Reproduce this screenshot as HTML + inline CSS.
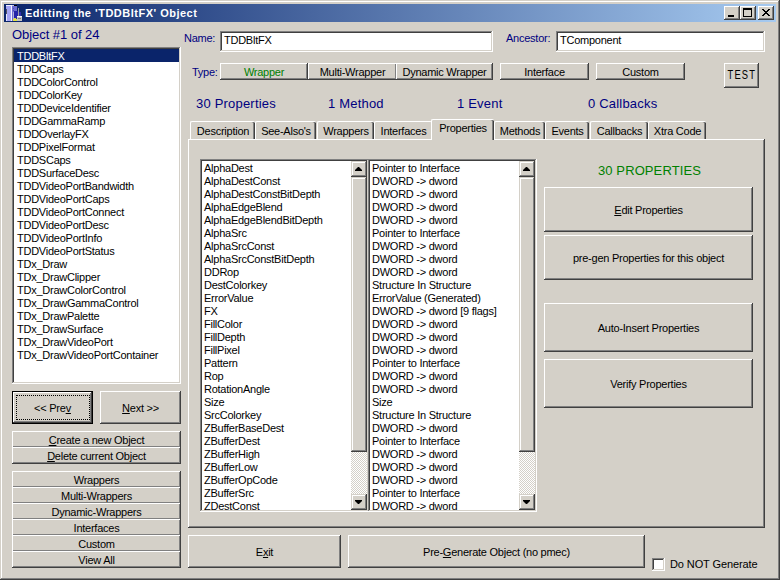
<!DOCTYPE html>
<html><head><meta charset="utf-8">
<style>
*{margin:0;padding:0;box-sizing:border-box}
html,body{width:780px;height:580px;overflow:hidden;background:#d4d0c8}
body{position:relative;font-family:"Liberation Sans",sans-serif;font-size:11px;color:#000;letter-spacing:-0.25px}
.a{position:absolute}
.win{left:0;top:0;width:780px;height:580px;background:#d4d0c8;
 box-shadow:inset -1px -1px #404040,inset 1px 1px #d4d0c8,inset -2px -2px #808080,inset 2px 2px #fff}
.title{left:4px;top:4px;width:772px;height:18px;background:linear-gradient(to right,#0a246a,#a6caf0)}
.ttext{left:25px;top:7px;color:#fff;font-weight:bold;font-size:11px;letter-spacing:0.5px;white-space:nowrap}
.raised{background:#d4d0c8;box-shadow:inset -1px -1px #404040,inset 1px 1px #fff,inset -2px -2px #808080,inset 2px 2px #d4d0c8}
.sunken{background:#fff;box-shadow:inset -1px -1px #fff,inset 1px 1px #808080,inset -2px -2px #d4d0c8,inset 2px 2px #404040}
.btn{display:flex;align-items:center;justify-content:center;white-space:nowrap;font-size:11px}
.lbl{white-space:nowrap;color:#000080}
.big{font-size:13px;letter-spacing:0.2px}
.list{overflow:hidden}
.list .it{height:13px;line-height:12px;padding-top:1px;padding-left:3px;white-space:nowrap;font-size:11px}
#lp .it,#lt .it{padding-left:2px}
.cb{width:13px;height:13px;background:#fff;box-shadow:inset -1px -1px #fff,inset 1px 1px #808080,inset -2px -2px #d4d0c8,inset 2px 2px #404040}
.tab{height:18px;top:121px;background:#d4d0c8;white-space:nowrap;font-size:11px;text-align:center;line-height:19px;
 border-left:1px solid #fff;border-top:1px solid #fff;border-top-left-radius:2px;border-top-right-radius:2px;
 box-shadow:inset -1px 0 #404040, inset -2px 0 #808080}

.sb{position:absolute;width:16px;background-color:#e8e6e2;background-image:repeating-conic-gradient(#fff 0 25%,#d4d0c8 0 50%);background-size:2px 2px}
.sbb{position:absolute;left:0;width:16px;background:#d4d0c8;box-shadow:inset -1px -1px #404040,inset 1px 1px #d4d0c8,inset -2px -2px #808080,inset 2px 2px #fff}
u{text-decoration:underline}
</style></head><body>
<div class="a win"></div>
<div class="a title"></div>
<svg class="a" style="left:0;top:0" width="24" height="24" viewBox="0 0 24 24" shape-rendering="crispEdges">
 <rect x="6" y="5" width="5" height="16" fill="#a4a4f4"/>
 <rect x="6" y="5" width="6" height="1" fill="#f0f0ff"/>
 <rect x="6" y="9" width="1" height="5" fill="#505060"/><rect x="6" y="14" width="1" height="7" fill="#e8e8ff"/>
 <rect x="11" y="5" width="1" height="16" fill="#f4f4ff"/>
 <rect x="12" y="6" width="5" height="15" fill="#6c6cd0"/>
 <rect x="12" y="5" width="2" height="1" fill="#c0c0f0"/>
 <rect x="14" y="5" width="3" height="1" fill="#000"/>
 <rect x="13" y="8" width="1" height="1" fill="#5050b0"/><rect x="13" y="10" width="1" height="1" fill="#5050b0"/>
 <rect x="14" y="11" width="4" height="8" fill="#2424a8"/>
 <rect x="13" y="12" width="1" height="7" fill="#b0b0d8"/>
 <rect x="18" y="8" width="1" height="9" fill="#9898a8"/>
 <rect x="19" y="12" width="2" height="4" fill="#3030b0"/>
 <rect x="13" y="19" width="4" height="2" fill="#e4e440"/>
 <rect x="14" y="18" width="2" height="1" fill="#d8d850"/>
 <rect x="17" y="16" width="5" height="5" fill="#c4c4c4"/>
 <rect x="17" y="16" width="5" height="1" fill="#f4f4f4"/>
 <rect x="18" y="18" width="3" height="1" fill="#808080"/>
</svg>
<div class="a ttext">Editting the 'TDDBltFX' Object</div>
<!-- caption buttons -->
<div class="a raised" style="left:724px;top:6px;width:16px;height:14px"><div class="a" style="left:4px;top:9px;width:6px;height:2px;background:#000"></div></div>
<div class="a raised" style="left:740px;top:6px;width:16px;height:14px"><div class="a" style="left:3px;top:2px;width:9px;height:9px;border:1px solid #000;border-top-width:2px"></div></div>
<div class="a raised" style="left:758px;top:6px;width:16px;height:14px">
 <svg class="a" style="left:4px;top:3px" width="8" height="7" viewBox="0 0 8 7" shape-rendering="crispEdges"><g fill="#000"><rect x="0" y="0" width="1" height="1"/><rect x="1" y="0" width="1" height="1"/><rect x="6" y="0" width="1" height="1"/><rect x="7" y="0" width="1" height="1"/><rect x="1" y="1" width="1" height="1"/><rect x="2" y="1" width="1" height="1"/><rect x="5" y="1" width="1" height="1"/><rect x="6" y="1" width="1" height="1"/><rect x="2" y="2" width="1" height="1"/><rect x="3" y="2" width="1" height="1"/><rect x="4" y="2" width="1" height="1"/><rect x="5" y="2" width="1" height="1"/><rect x="3" y="3" width="1" height="1"/><rect x="4" y="3" width="1" height="1"/><rect x="2" y="4" width="1" height="1"/><rect x="3" y="4" width="1" height="1"/><rect x="4" y="4" width="1" height="1"/><rect x="5" y="4" width="1" height="1"/><rect x="1" y="5" width="1" height="1"/><rect x="2" y="5" width="1" height="1"/><rect x="5" y="5" width="1" height="1"/><rect x="6" y="5" width="1" height="1"/><rect x="0" y="6" width="1" height="1"/><rect x="1" y="6" width="1" height="1"/><rect x="6" y="6" width="1" height="1"/><rect x="7" y="6" width="1" height="1"/></g></svg>
</div>

<!-- left column -->
<div class="a lbl big" style="left:12px;top:27px;letter-spacing:-0.05px">Object #1 of 24</div>
<div class="a sunken list" style="left:12px;top:47px;width:169px;height:337px;padding:2px">
 <div class="it" style="background:#0a246a;color:#fff">TDDBltFX</div>
 <div class="it">TDDCaps</div>
 <div class="it">TDDColorControl</div>
 <div class="it">TDDColorKey</div>
 <div class="it">TDDDeviceIdentifier</div>
 <div class="it">TDDGammaRamp</div>
 <div class="it">TDDOverlayFX</div>
 <div class="it">TDDPixelFormat</div>
 <div class="it">TDDSCaps</div>
 <div class="it">TDDSurfaceDesc</div>
 <div class="it">TDDVideoPortBandwidth</div>
 <div class="it">TDDVideoPortCaps</div>
 <div class="it">TDDVideoPortConnect</div>
 <div class="it">TDDVideoPortDesc</div>
 <div class="it">TDDVideoPortInfo</div>
 <div class="it">TDDVideoPortStatus</div>
 <div class="it">TDx_Draw</div>
 <div class="it">TDx_DrawClipper</div>
 <div class="it">TDx_DrawColorControl</div>
 <div class="it">TDx_DrawGammaControl</div>
 <div class="it">TDx_DrawPalette</div>
 <div class="it">TDx_DrawSurface</div>
 <div class="it">TDx_DrawVideoPort</div>
 <div class="it">TDx_DrawVideoPortContainer</div>
</div>
<div class="a" style="left:12px;top:391px;width:81px;height:33px;background:#000;padding:1px">
 <div class="raised btn" style="width:79px;height:31px;position:relative">&lt;&lt; Pre<u>v</u>
  <div class="a" style="left:3px;top:3px;width:74px;height:25px;border:1px dotted #000"></div>
 </div>
</div>
<div class="a raised btn" style="left:100px;top:391px;width:81px;height:33px"><u>N</u>ext &gt;&gt;</div>
<div class="a raised btn" style="left:12px;top:431px;width:169px;height:17px"><u>C</u>reate a new Object</div>
<div class="a raised btn" style="left:12px;top:447px;width:169px;height:17px"><u>D</u>elete current Object</div>
<div class="a raised btn" style="left:12px;top:471px;width:169px;height:17px">Wrappers</div>
<div class="a raised btn" style="left:12px;top:487px;width:169px;height:17px">Multi-Wrappers</div>
<div class="a raised btn" style="left:12px;top:503px;width:169px;height:17px">Dynamic-Wrappers</div>
<div class="a raised btn" style="left:12px;top:519px;width:169px;height:17px">Interfaces</div>
<div class="a raised btn" style="left:12px;top:535px;width:169px;height:17px">Custom</div>
<div class="a raised btn" style="left:12px;top:551px;width:169px;height:17px">View All</div>

<!-- top fields -->
<div class="a lbl" style="left:184px;top:32px">Name:</div>
<div class="a sunken" style="left:220px;top:31px;width:273px;height:21px"><div class="a" style="left:4px;top:3px">TDDBltFX</div></div>
<div class="a lbl" style="left:506px;top:32px">Ancestor:</div>
<div class="a sunken" style="left:556px;top:31px;width:209px;height:21px"><div class="a" style="left:4px;top:3px">TComponent</div></div>

<div class="a lbl" style="left:192px;top:66px">Type:</div>
<div class="a raised btn" style="left:220px;top:63px;width:88px;height:17px;color:#008000">Wrapper</div>
<div class="a raised btn" style="left:308px;top:63px;width:89px;height:17px">Multi-Wrapper</div>
<div class="a raised btn" style="left:396px;top:63px;width:97px;height:17px">Dynamic Wrapper</div>
<div class="a raised btn" style="left:500px;top:63px;width:89px;height:17px">Interface</div>
<div class="a raised btn" style="left:596px;top:63px;width:89px;height:17px">Custom</div>
<div class="a raised btn" style="left:724px;top:63px;width:35px;height:25px"><span style="display:inline-block;font-size:13px;letter-spacing:1.6px;transform:scaleX(0.72);position:relative;top:-1px;left:0">TEST</span></div>

<div class="a lbl big" style="left:196px;top:96px">30 Properties</div>
<div class="a lbl big" style="left:328px;top:96px">1 Method</div>
<div class="a lbl big" style="left:457px;top:96px">1 Event</div>
<div class="a lbl big" style="left:588px;top:96px">0 Callbacks</div>

<!-- tab panel -->
<div class="a raised" style="left:188px;top:139px;width:577px;height:389px"></div>
<div class="a tab" style="left:190px;width:65px">Description</div>
<div class="a tab" style="left:255px;width:61px">See-Also's</div>
<div class="a tab" style="left:317px;width:57px">Wrappers</div>
<div class="a tab" style="left:374px;width:58px;box-shadow:none">Interfaces</div>
<div class="a tab" style="left:494px;width:51px">Methods</div>
<div class="a tab" style="left:545px;width:44px">Events</div>
<div class="a tab" style="left:590px;width:58px">Callbacks</div>
<div class="a tab" style="left:648px;width:58px">Xtra Code</div>
<div class="a tab" style="left:431px;top:119px;width:63px;height:21px;line-height:17px">Properties</div>

<!-- lists -->
<div id="lp" class="a sunken list" style="left:200px;top:159px;width:169px;height:353px;padding:2px"><div class="it">AlphaDest</div><div class="it">AlphaDestConst</div><div class="it">AlphaDestConstBitDepth</div><div class="it">AlphaEdgeBlend</div><div class="it">AlphaEdgeBlendBitDepth</div><div class="it">AlphaSrc</div><div class="it">AlphaSrcConst</div><div class="it">AlphaSrcConstBitDepth</div><div class="it">DDRop</div><div class="it">DestColorkey</div><div class="it">ErrorValue</div><div class="it">FX</div><div class="it">FillColor</div><div class="it">FillDepth</div><div class="it">FillPixel</div><div class="it">Pattern</div><div class="it">Rop</div><div class="it">RotationAngle</div><div class="it">Size</div><div class="it">SrcColorkey</div><div class="it">ZBufferBaseDest</div><div class="it">ZBufferDest</div><div class="it">ZBufferHigh</div><div class="it">ZBufferLow</div><div class="it">ZBufferOpCode</div><div class="it">ZBufferSrc</div><div class="it">ZDestConst</div></div>
<div id="lt" class="a sunken list" style="left:368px;top:159px;width:169px;height:353px;padding:2px"><div class="it">Pointer to Interface</div><div class="it">DWORD -&gt; dword</div><div class="it">DWORD -&gt; dword</div><div class="it">DWORD -&gt; dword</div><div class="it">DWORD -&gt; dword</div><div class="it">Pointer to Interface</div><div class="it">DWORD -&gt; dword</div><div class="it">DWORD -&gt; dword</div><div class="it">DWORD -&gt; dword</div><div class="it">Structure In Structure</div><div class="it">ErrorValue (Generated)</div><div class="it">DWORD -&gt; dword [9 flags]</div><div class="it">DWORD -&gt; dword</div><div class="it">DWORD -&gt; dword</div><div class="it">DWORD -&gt; dword</div><div class="it">Pointer to Interface</div><div class="it">DWORD -&gt; dword</div><div class="it">DWORD -&gt; dword</div><div class="it">Size</div><div class="it">Structure In Structure</div><div class="it">DWORD -&gt; dword</div><div class="it">Pointer to Interface</div><div class="it">DWORD -&gt; dword</div><div class="it">DWORD -&gt; dword</div><div class="it">DWORD -&gt; dword</div><div class="it">Pointer to Interface</div><div class="it">DWORD -&gt; dword</div></div>

<div class="sb" style="left:351px;top:161px;height:349px"><div class="sbb" style="top:0;height:16px"><svg class="a" style="left:4px;top:6px" width="7" height="4" viewBox="0 0 7 4"><path d="M3 0h1l3 3v1h-7v-1z" fill="#000"/></svg></div><div class="sbb" style="top:16px;height:275px"></div><div class="sbb" style="top:333px;height:16px"><svg class="a" style="left:4px;top:6px" width="7" height="4" viewBox="0 0 7 4"><path d="M0 0h7v1l-3 3h-1l-3-3z" fill="#000"/></svg></div></div><div class="sb" style="left:519px;top:161px;height:349px"><div class="sbb" style="top:0;height:16px"><svg class="a" style="left:4px;top:6px" width="7" height="4" viewBox="0 0 7 4"><path d="M3 0h1l3 3v1h-7v-1z" fill="#000"/></svg></div><div class="sbb" style="top:16px;height:275px"></div><div class="sbb" style="top:333px;height:16px"><svg class="a" style="left:4px;top:6px" width="7" height="4" viewBox="0 0 7 4"><path d="M0 0h7v1l-3 3h-1l-3-3z" fill="#000"/></svg></div></div>
<div class="a" style="left:598px;top:163px;font-size:13px;color:#008000;white-space:nowrap;letter-spacing:0.1px">30 PROPERTIES</div>
<div class="a raised btn" style="left:544px;top:187px;width:209px;height:45px"><u>E</u>dit Properties</div>
<div class="a raised btn" style="left:544px;top:235px;width:209px;height:45px">pre-gen Properties for this object</div>
<div class="a raised btn" style="left:544px;top:303px;width:209px;height:49px">Auto-Insert Properties</div>
<div class="a raised btn" style="left:544px;top:359px;width:209px;height:49px">Verify Properties</div>

<!-- bottom -->
<div class="a raised btn" style="left:188px;top:535px;width:153px;height:33px">E<u>x</u>it</div>
<div class="a raised btn" style="left:348px;top:535px;width:297px;height:33px">Pre-<u>G</u>enerate Object (no pmec)</div>
<div class="a cb" style="left:652px;top:558px"></div>
<div class="a" style="left:670px;top:558px;white-space:nowrap;letter-spacing:-0.1px">Do NOT Generate</div>
</body></html>
